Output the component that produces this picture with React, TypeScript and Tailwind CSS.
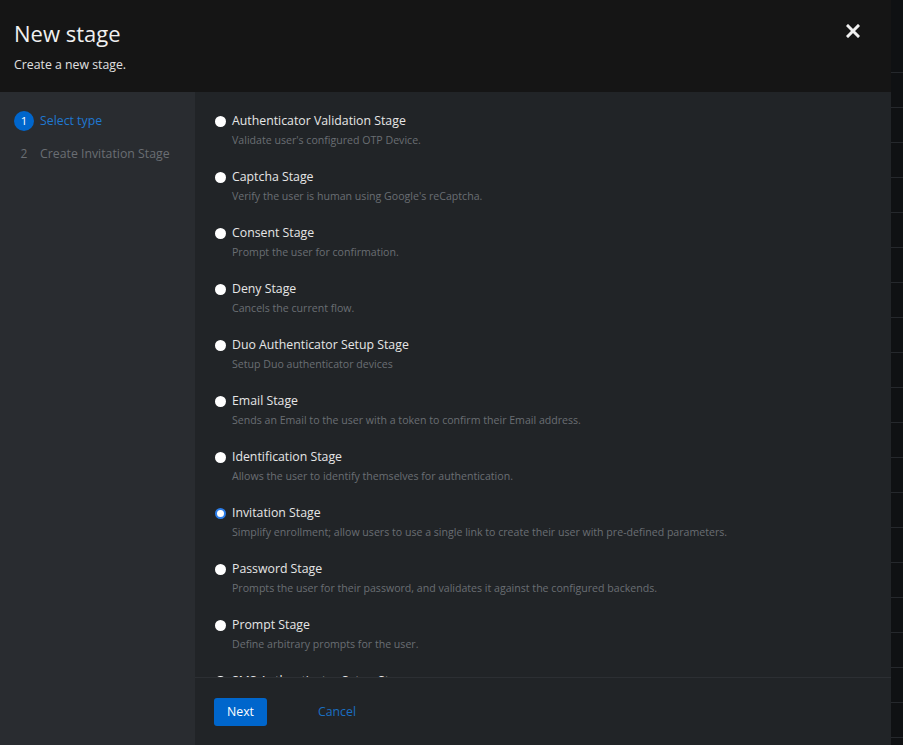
import { useState } from "react";

interface StageType {
  name: string;
  description: string;
}

const stageTypes: StageType[] = [
  { name: "Authenticator Validation Stage", description: "Validate user's configured OTP Device." },
  { name: "Captcha Stage", description: "Verify the user is human using Google's reCaptcha." },
  { name: "Consent Stage", description: "Prompt the user for confirmation." },
  { name: "Deny Stage", description: "Cancels the current flow." },
  { name: "Duo Authenticator Setup Stage", description: "Setup Duo authenticator devices" },
  { name: "Email Stage", description: "Sends an Email to the user with a token to confirm their Email address." },
  { name: "Identification Stage", description: "Allows the user to identify themselves for authentication." },
  { name: "Invitation Stage", description: "Simplify enrollment; allow users to use a single link to create their user with pre-defined parameters." },
  { name: "Password Stage", description: "Prompts the user for their password, and validates it against the configured backends." },
  { name: "Prompt Stage", description: "Define arbitrary prompts for the user." },
  { name: "SMS Authenticator Setup Stage", description: "Use SMS-based TOTP instead of authenticator-based." },
  { name: "Static Authenticator Stage", description: "Generate static tokens for the user as a backup." },
];

export default function App() {
  const [selected, setSelected] = useState("Invitation Stage");

  return (
    <div
      className="flex h-[745px] w-[903px] overflow-hidden bg-[#0f1113]"
      style={{ fontFamily: '"Open Sans", "Noto Sans", sans-serif' }}
    >
      {/* modal */}
      <div className="flex w-[891px] flex-col">
        {/* header */}
        <div className="flex h-[92px] shrink-0 items-start justify-between bg-[#151515] pl-[14px] pr-[31px]">
          <div className="pt-[18px]">
            <h1 className="text-[22px] leading-[30px] text-[#f0f0f0]">New stage</h1>
            <p className="mt-[8px] text-[12.3px] text-[#e0e0e0]">Create a new stage.</p>
          </div>
          <button className="mt-[24px] text-[#f0f0f0]">
            <svg width="14" height="14" viewBox="0 0 14 14">
              <path d="M2 2 L12 12 M12 2 L2 12" stroke="currentColor" strokeWidth="3" strokeLinecap="square" />
            </svg>
          </button>
        </div>

        <div className="flex min-h-0 flex-1">
          {/* steps nav */}
          <div className="w-[195px] shrink-0 bg-[#292c30] pl-[14px] pt-[19px]">
            <div className="flex items-center gap-[6px]">
              <span className="flex h-[20px] w-[20px] items-center justify-center rounded-full bg-[#0066cc] text-[11.5px] text-white">
                1
              </span>
              <span className="text-[12.3px] text-[#1f78d1]">Select type</span>
            </div>
            <div className="mt-[13px] flex items-center gap-[6px]">
              <span className="flex h-[20px] w-[20px] items-center justify-center text-[12px] text-[#6a6e73]">2</span>
              <span className="text-[12.3px] text-[#6a6e73]">Create Invitation Stage</span>
            </div>
          </div>

          {/* main */}
          <div className="flex min-w-0 flex-1 flex-col bg-[#212427]">
            <div className="min-h-0 flex-1 overflow-hidden border-b border-[#2c2f33] pl-[20px] pt-[21px]">
              {stageTypes.map((stage) => {
                const checked = selected === stage.name;
                return (
                  <label key={stage.name} className="mb-[21px] flex cursor-pointer items-start gap-[6px]">
                    <span
                      className={
                        checked
                          ? "mt-[3px] h-[11px] w-[11px] shrink-0 rounded-full border-[2.5px] border-[#2b7de9] bg-white"
                          : "mt-[3px] h-[11px] w-[11px] shrink-0 rounded-full bg-white"
                      }
                      onClick={() => setSelected(stage.name)}
                    />
                    <span className="flex flex-col">
                      <span className="text-[12.3px] leading-[16px] text-[#e6e6e6]">{stage.name}</span>
                      <span className="mt-[3px] text-[10.6px] leading-[16px] text-[#6a6e73]">{stage.description}</span>
                    </span>
                  </label>
                );
              })}
            </div>
            <div className="flex h-[67px] shrink-0 items-center gap-[51px] pl-[19px] pt-[1px]">
              <button className="h-[28px] rounded-[3px] bg-[#0066cc] px-[13px] text-[12.3px] text-white">Next</button>
              <button className="text-[12.3px] text-[#1a6fc2]">Cancel</button>
            </div>
          </div>
        </div>
      </div>

      {/* background table peeking out */}
      <div className="flex flex-1 flex-col pt-[72px]">
        {Array.from({ length: 20 }).map((_, i) => (
          <div key={i} className="h-[35px] shrink-0 border-t border-[#25282c]" />
        ))}
      </div>
    </div>
  );
}
